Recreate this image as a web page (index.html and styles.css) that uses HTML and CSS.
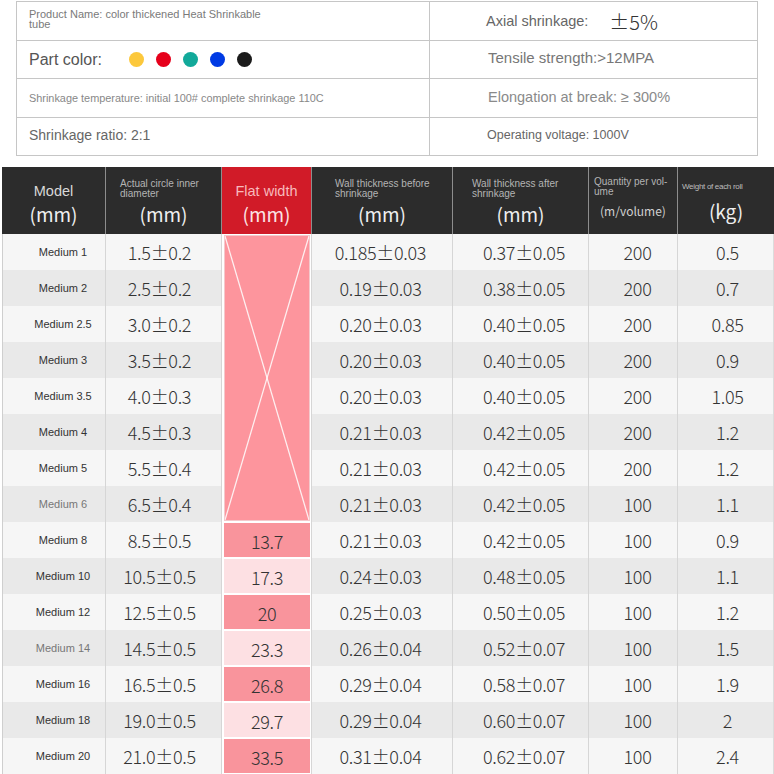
FILE: index.html
```html
<!DOCTYPE html>
<html>
<head>
<meta charset="utf-8">
<link rel="stylesheet" href="styles.css">
</head>
<body>
<div class="info">
  <div class="ic l name">Product Name: color thickened Heat Shrinkable tube</div>
  <div class="ic r axial"><span>Axial shrinkage:</span><span class="pm">±5%</span></div>
  <div class="ic l pcolor"><span class="pc">Part color:</span><span class="dots"><i class="dot yellow"></i><i class="dot red"></i><i class="dot teal"></i><i class="dot blue"></i><i class="dot black"></i></span></div>
  <div class="ic r tensile">Tensile strength:&gt;12MPA</div>
  <div class="ic l temp">Shrinkage temperature: initial 100# complete shrinkage 110C</div>
  <div class="ic r elong">Elongation at break: ≥ 300%</div>
  <div class="ic l ratio">Shrinkage ratio: 2:1</div>
  <div class="ic r volt">Operating voltage: 1000V</div>
</div>

<div class="spec">
  <div class="h"><div class="lbl mid">Model</div><div class="unit">(mm)</div></div>
  <div class="h"><div class="lbl small p14">Actual circle inner<br>diameter</div><div class="unit">(mm)</div></div>
  <div class="h red"><div class="lbl mid flat">Flat width</div><div class="unit pinkish">(mm)</div></div>
  <div class="h"><div class="lbl small p23">Wall thickness before<br>shrinkage</div><div class="unit">(mm)</div></div>
  <div class="h"><div class="lbl small p19">Wall thickness after<br>shrinkage</div><div class="unit">(mm)</div></div>
  <div class="h"><div class="lbl small p5 up">Quantity per vol-<br>ume</div><div class="unit sm">(m/volume)</div></div>
  <div class="h last"><div class="lbl tiny">Weight of each roll</div><div class="unit kg">(kg)</div></div>

  <div class="row odd">
    <div class="c m">Medium 1</div><div class="c c2">1.5±0.2</div>
    <div class="c f merge"><div class="pk big"><svg viewBox="0 0 100 100" preserveAspectRatio="none"><line x1="0" y1="0" x2="100" y2="100"/><line x1="100" y1="0" x2="0" y2="100"/></svg></div></div>
    <div class="c c4">0.185±0.03</div><div class="c c5">0.37±0.05</div><div class="c c6">200</div><div class="c c7">0.5</div>
  </div>
  <div class="row even">
    <div class="c m">Medium 2</div><div class="c c2">2.5±0.2</div>
    <div class="c c4">0.19±0.03</div><div class="c c5">0.38±0.05</div><div class="c c6">200</div><div class="c c7">0.7</div>
  </div>
  <div class="row odd">
    <div class="c m">Medium 2.5</div><div class="c c2">3.0±0.2</div>
    <div class="c c4">0.20±0.03</div><div class="c c5">0.40±0.05</div><div class="c c6">200</div><div class="c c7">0.85</div>
  </div>
  <div class="row even">
    <div class="c m">Medium 3</div><div class="c c2">3.5±0.2</div>
    <div class="c c4">0.20±0.03</div><div class="c c5">0.40±0.05</div><div class="c c6">200</div><div class="c c7">0.9</div>
  </div>
  <div class="row odd">
    <div class="c m">Medium 3.5</div><div class="c c2">4.0±0.3</div>
    <div class="c c4">0.20±0.03</div><div class="c c5">0.40±0.05</div><div class="c c6">200</div><div class="c c7">1.05</div>
  </div>
  <div class="row even">
    <div class="c m">Medium 4</div><div class="c c2">4.5±0.3</div>
    <div class="c c4">0.21±0.03</div><div class="c c5">0.42±0.05</div><div class="c c6">200</div><div class="c c7">1.2</div>
  </div>
  <div class="row odd">
    <div class="c m">Medium 5</div><div class="c c2">5.5±0.4</div>
    <div class="c c4">0.21±0.03</div><div class="c c5">0.42±0.05</div><div class="c c6">200</div><div class="c c7">1.2</div>
  </div>
  <div class="row even">
    <div class="c m dim">Medium 6</div><div class="c c2">6.5±0.4</div>
    <div class="c c4">0.21±0.03</div><div class="c c5">0.42±0.05</div><div class="c c6">100</div><div class="c c7">1.1</div>
  </div>
  <div class="row odd">
    <div class="c m">Medium 8</div><div class="c c2">8.5±0.5</div>
    <div class="c f"><div class="pk">13.7</div></div>
    <div class="c c4">0.21±0.03</div><div class="c c5">0.42±0.05</div><div class="c c6">100</div><div class="c c7">0.9</div>
  </div>
  <div class="row even">
    <div class="c m">Medium 10</div><div class="c c2">10.5±0.5</div>
    <div class="c f"><div class="pk lt">17.3</div></div>
    <div class="c c4">0.24±0.03</div><div class="c c5">0.48±0.05</div><div class="c c6">100</div><div class="c c7">1.1</div>
  </div>
  <div class="row odd">
    <div class="c m">Medium 12</div><div class="c c2">12.5±0.5</div>
    <div class="c f"><div class="pk">20</div></div>
    <div class="c c4">0.25±0.03</div><div class="c c5">0.50±0.05</div><div class="c c6">100</div><div class="c c7">1.2</div>
  </div>
  <div class="row even">
    <div class="c m dim">Medium 14</div><div class="c c2">14.5±0.5</div>
    <div class="c f"><div class="pk lt">23.3</div></div>
    <div class="c c4">0.26±0.04</div><div class="c c5">0.52±0.07</div><div class="c c6">100</div><div class="c c7">1.5</div>
  </div>
  <div class="row odd">
    <div class="c m">Medium 16</div><div class="c c2">16.5±0.5</div>
    <div class="c f"><div class="pk">26.8</div></div>
    <div class="c c4">0.29±0.04</div><div class="c c5">0.58±0.07</div><div class="c c6">100</div><div class="c c7">1.9</div>
  </div>
  <div class="row even">
    <div class="c m">Medium 18</div><div class="c c2">19.0±0.5</div>
    <div class="c f"><div class="pk lt">29.7</div></div>
    <div class="c c4">0.29±0.04</div><div class="c c5">0.60±0.07</div><div class="c c6">100</div><div class="c c7">2</div>
  </div>
  <div class="row odd">
    <div class="c m">Medium 20</div><div class="c c2">21.0±0.5</div>
    <div class="c f"><div class="pk">33.5</div></div>
    <div class="c c4">0.31±0.04</div><div class="c c5">0.62±0.07</div><div class="c c6">100</div><div class="c c7">2.4</div>
  </div>
</div>
</body>
</html>
```

FILE: styles.css
```css
* { box-sizing: border-box; margin: 0; padding: 0; }
html, body { background: #fff; }
body {
  margin: 0;
  width: 774px;
  height: 774px;
  overflow: hidden;
  font-family: "Liberation Sans", Arial, sans-serif;
}

/* ---------- info table ---------- */
.info {
  display: grid;
  grid-template-columns: 413px 328px;
  grid-template-rows: 39px 38px 39px 38px;
  width: 742px;
  margin: 1px 0 0 16px;
  border-top: 1px solid #c6c6c6;
  border-left: 1px solid #c6c6c6;
}
.ic {
  display: flex;
  align-items: center;
  border-right: 1px solid #c6c6c6;
  border-bottom: 1px solid #c6c6c6;
  color: #777;
}
.ic.l { padding-left: 12px; }
.ic.r { padding-left: 56px; }
.name {
  align-items: flex-start;
  padding-top: 7px;
  font-size: 11px;
  line-height: 10px;
  color: #7a7a7a;
  padding-right: 160px;
}
.pcolor { padding-left: 10px; }
.pc { font-size: 16px; color: #555; }
.dots { display: flex; gap: 12px; margin-left: 27px; }
.dot { display: block; width: 15px; height: 15px; border-radius: 50%; }
.yellow { background: #fcc83c; }
.red { background: #e6001b; }
.teal { background: #12a99a; }
.blue { background: #003ae4; }
.black { background: #1b1b1b; }
.temp { font-size: 10.9px; color: #888; padding-bottom: 1px; }
.ratio { font-size: 14px; color: #666; padding-bottom: 3px; }
.axial { font-size: 14.5px; color: #666; }
.pm {
  font-family: "Noto Sans CJK SC", sans-serif;
  font-size: 20px;
  font-weight: 300;
  color: #333;
  margin-left: 21px;
}
.tensile { font-size: 15px; color: #777; padding-left: 58px !important; padding-bottom: 5px; }
.elong { font-size: 14.5px; color: #8a8a8a; padding-left: 58px !important; padding-bottom: 2px; }
.volt { font-size: 12.5px; color: #666; padding-left: 57px !important; padding-bottom: 3px; }

/* ---------- spec table ---------- */
.spec {
  display: grid;
  grid-template-columns: 104px 116px 90px 141px 136px 89px 96px;
  grid-template-rows: 67px repeat(15, 36px);
  width: 772px;
  margin: 11px 0 0 2px;
}
.h {
  display: flex;
  flex-direction: column;
  background: #2c2c2c;
  border-right: 1px solid #8d8d8d;
}
.h.last { border-right: 0; }
.h.red { background: #d11b28; }
.lbl { height: 31.5px; flex: none; }
.lbl.mid {
  display: flex;
  align-items: flex-end;
  justify-content: center;
  font-size: 14.5px;
  line-height: 16px;
  color: #d8d8d8;
}
.lbl.flat { color: #f7b9bc; }
.lbl.small {
  font-size: 10px;
  line-height: 9.5px;
  color: #b4b4b4;
  padding-top: 12.25px;
}
.lbl.up { padding-top: 10.25px; }
.lbl.tiny {
  font-size: 8px;
  line-height: 9px;
  color: #bdbdbd;
  padding: 14.5px 0 0 4px;
  letter-spacing: -0.3px;
}
.p14 { padding-left: 14px; }
.p23 { padding-left: 23px; }
.p19 { padding-left: 19px; }
.p5 { padding-left: 5px; }
.unit {
  text-align: center;
  font-family: "Noto Sans CJK SC", sans-serif;
  font-size: 19px;
  line-height: 29px;
  color: #efefef;
}
.unit.kg { margin-top: -2.5px; }
.unit.sm { font-size: 12px; color: #d0d0d0; margin-top: -3px; }
.unit.pinkish { color: #fbe3e4; }

.row { display: contents; }
.c {
  display: flex;
  align-items: center;
  justify-content: center;
  background: #f6f6f6;
  border-right: 1px solid #d6d6d6;
  font-family: "Noto Sans CJK SC", sans-serif;
  font-weight: 300;
  font-size: 18px;
  letter-spacing: -0.3px;
  color: #333;
  padding-bottom: 1px;
}
.row.even > .c { background: #e9e9e9; }
.c2 { padding-right: 8px; }
.c4 { padding-right: 3px; }
.c5 { padding-left: 7px; }
.c6 { padding-left: 9px; }
.c7 { padding-left: 4px; border-right-color: #dcdcdc; }
.c.m {
  font-family: "Liberation Sans", Arial, sans-serif;
  font-weight: 400;
  font-size: 11px;
  letter-spacing: 0;
  color: #333;
  border-left: 1px solid #cfcfcf;
  padding-left: 18px;
}
.c.m.dim { color: #777; }
.row > .c.f {
  background: #fff;
  padding: 1px 1px 1px 2px;
  align-items: stretch;
}
.c.merge { grid-row: span 8; padding-top: 2px; }
.pk {
  flex: 1;
  display: flex;
  align-items: center;
  justify-content: center;
  background: #f9949c;
  padding-top: 1px;
}
.pk.lt { background: #fde0e3; }
.pk.big { padding: 0; background: #fd959d; border: 1px solid #f4c9cc; }
.pk.big svg { display: block; width: 100%; height: 100%; }
.pk.big line { stroke: #fff; stroke-width: 1.3; vector-effect: non-scaling-stroke; opacity: 0.85; }
```
